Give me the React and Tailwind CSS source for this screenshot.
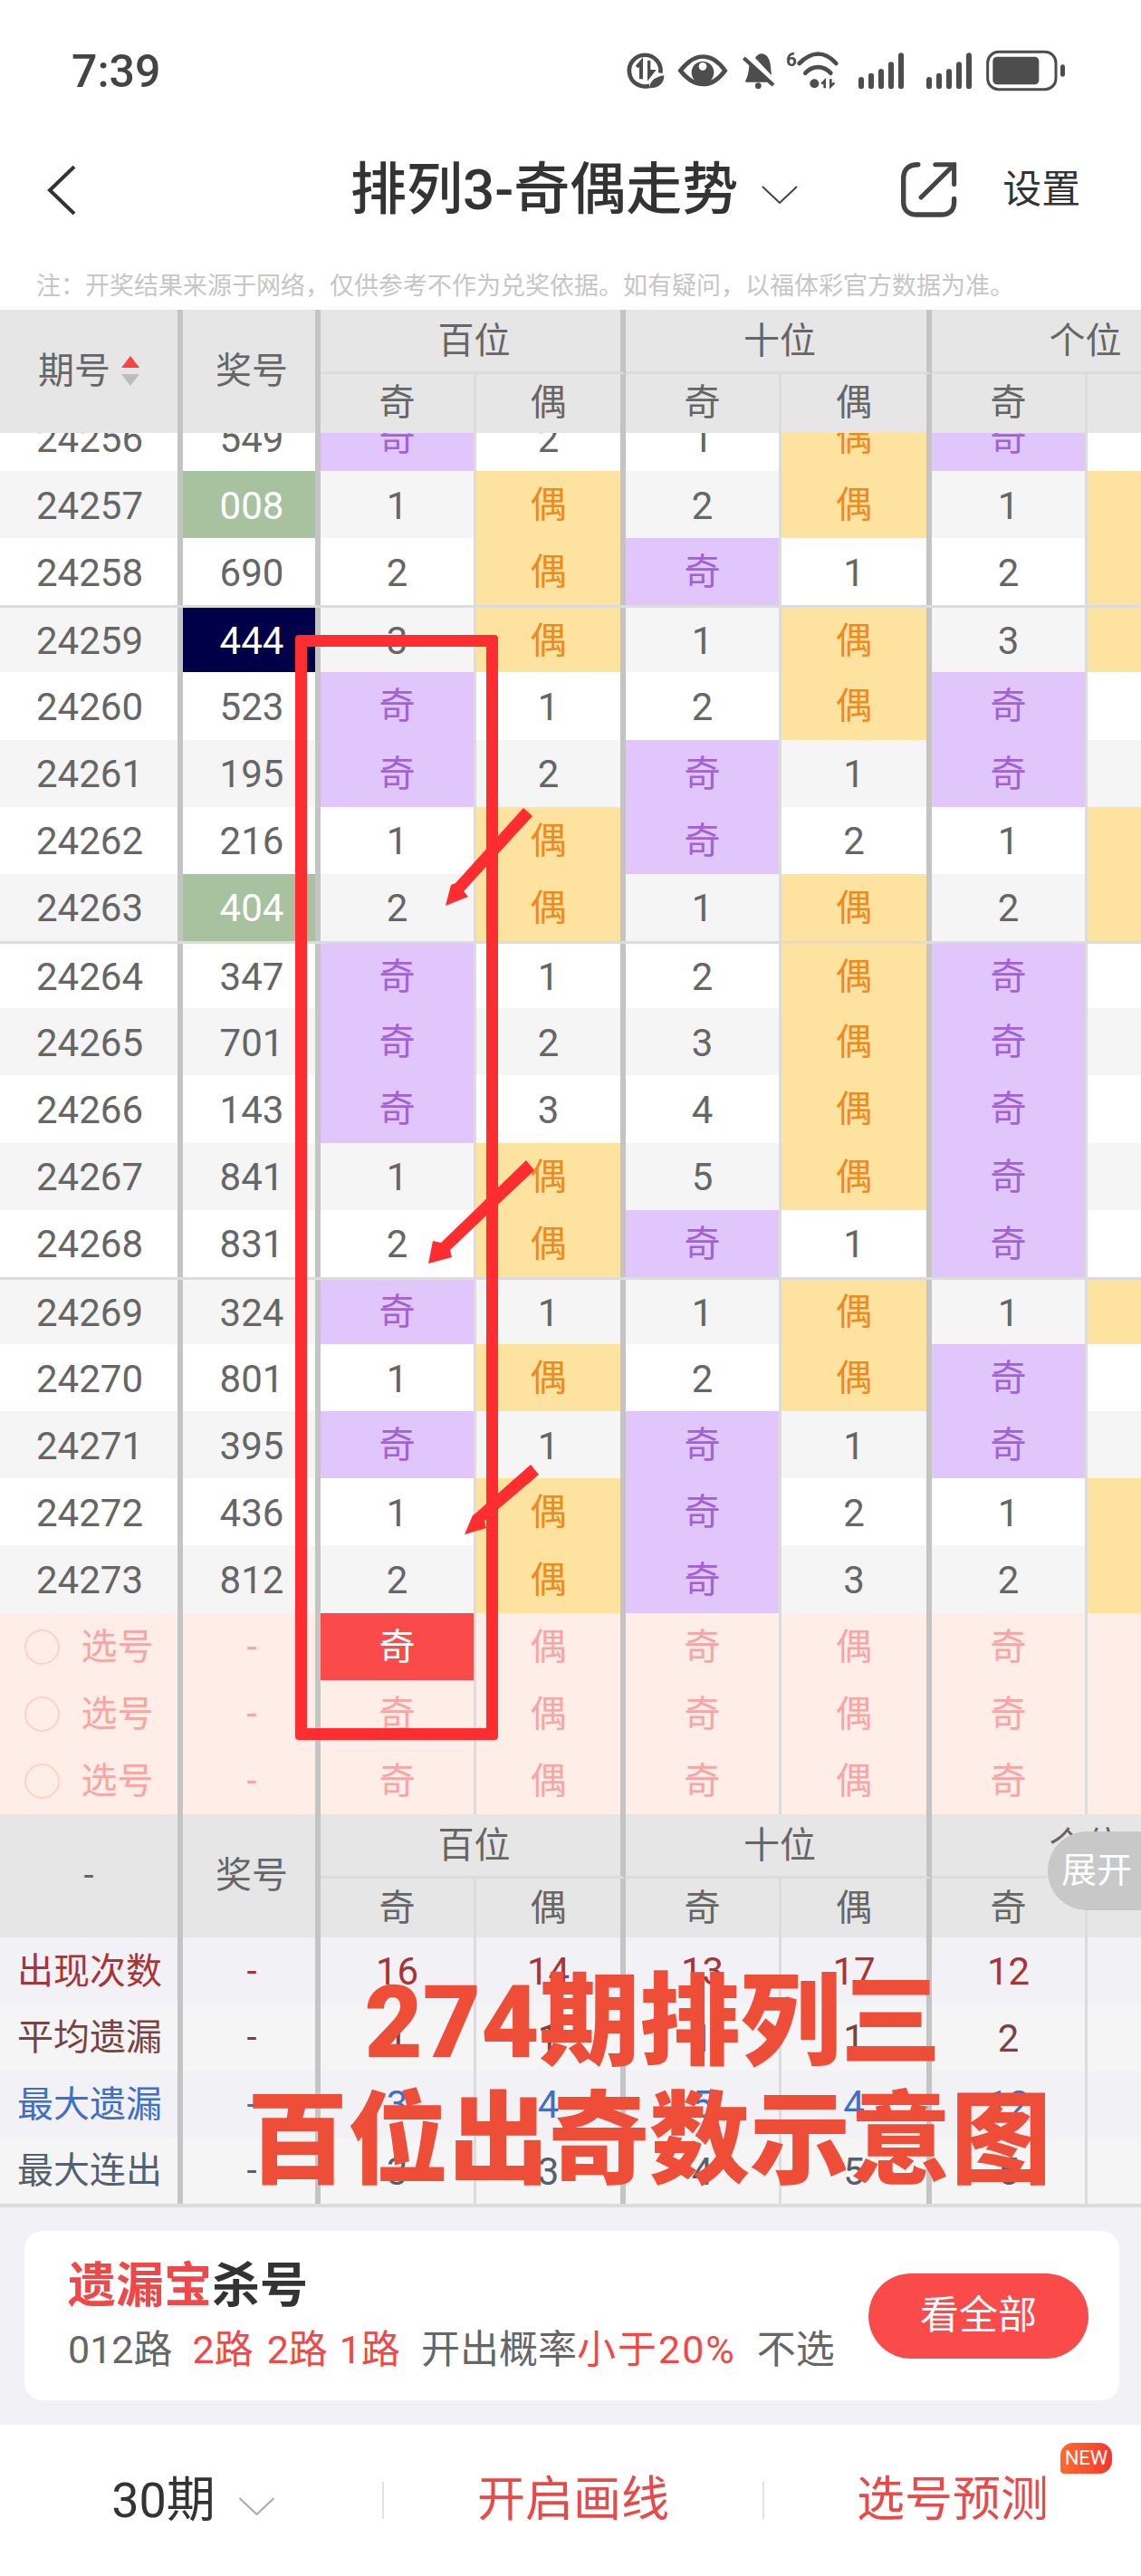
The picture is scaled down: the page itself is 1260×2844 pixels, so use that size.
const FONT = "font-['Roboto','Noto_Sans_CJK_SC',sans-serif]";
const COLS = 'grid grid-cols-[202px_152px_172px_165px_172px_166px_172px_165px] w-[1366px]';

const THICK = 'border-r-[6px] border-[#c4c4c4]';
const THIN = 'border-r-[3px] border-[#dcdcdc]';
// divider for each of the 8 columns
const DIV = [THICK, THICK, THIN, THICK, THIN, THICK, THIN, THICK];

const ROWS = [
  ['24257', '008', 'green'], ['24258', '690'], ['24259', '444', 'navy', true], ['24260', '523'],
  ['24261', '195'], ['24262', '216'], ['24263', '404', 'green'], ['24264', '347', null, true],
  ['24265', '701'], ['24266', '143'], ['24267', '841'], ['24268', '831'],
  ['24269', '324', null, true], ['24270', '801'], ['24271', '395'], ['24272', '436'], ['24273', '812'],
];

// miss counts as shown in the chart, 奇/偶 per position
const MISS = {
  24256: [[0, 2], [1, 0], [0, 1]],
  24257: [[1, 0], [2, 0], [1, 0]],
  24258: [[2, 0], [0, 1], [2, 0]],
  24259: [[3, 0], [1, 0], [3, 0]],
  24260: [[0, 1], [2, 0], [0, 1]],
  24261: [[0, 2], [0, 1], [0, 2]],
  24262: [[1, 0], [0, 2], [1, 0]],
  24263: [[2, 0], [1, 0], [2, 0]],
  24264: [[0, 1], [2, 0], [0, 1]],
  24265: [[0, 2], [3, 0], [0, 2]],
  24266: [[0, 3], [4, 0], [0, 3]],
  24267: [[1, 0], [5, 0], [0, 4]],
  24268: [[2, 0], [0, 1], [0, 5]],
  24269: [[0, 1], [1, 0], [1, 0]],
  24270: [[1, 0], [2, 0], [0, 1]],
  24271: [[0, 1], [0, 1], [0, 2]],
  24272: [[1, 0], [0, 2], [1, 0]],
  24273: [[2, 0], [0, 3], [2, 0]],
};

function Cell({ i, className = '', children }) {
  return (
    <div className={`flex items-center justify-center ${DIV[i]} ${className}`}>
      <div className="flex h-full w-full items-center justify-center pt-[2px]">{children}</div>
    </div>
  );
}

function DataRow({ no, prize, mark, groupStart, className = '' }) {
  const stripe = Number(no) % 2 === 1 ? 'bg-[#f5f5f5]' : 'bg-white';
  const prizeBg = mark === 'green' ? 'bg-[#a8c2a0] text-white' : mark === 'navy' ? 'bg-[#000048] text-white' : 'text-[#666666]';
  const values = MISS[no].flat();
  return (
    <div className={`${COLS} h-[74.18px] ${stripe} ${groupStart ? 'border-t-[3px] border-[#dcdcdc]' : ''} ${className}`}>
      <Cell i={0} className="text-[42px] text-[#666666]"><span className="pl-[2px]">{no}</span></Cell>
      <Cell i={1} className={`text-[42px] ${prizeBg}`}><span className="pl-[6px]">{prize}</span></Cell>
      {values.map((v, k) => {
        const even = k % 2 === 1;
        if (v > 0) return <Cell key={k} i={k + 2} className="text-[42px] text-[#666666]">{v}</Cell>;
        return (
          <Cell key={k} i={k + 2} className={even ? 'bg-[#fde2a0] text-[#ed8a22]' : 'bg-[#e1c6fc] text-[#a262d6]'}>
            {even ? '偶' : '奇'}
          </Cell>
        );
      })}
    </div>
  );
}

function PickRow({ active }) {
  const labels = ['奇', '偶', '奇', '偶', '奇', '偶'];
  return (
    <div className={`${COLS} h-[74.18px] bg-[#ffeee8] text-[#f7a5a5]`}>
      <Cell i={0}>
        <span className="mr-[24px] h-[39px] w-[39px] rounded-full border-2 border-[#fdd3c6]" />
        <span>选号</span>
      </Cell>
      <Cell i={1}><span className="pl-[6px]">-</span></Cell>
      {labels.map((t, k) => (
        <Cell key={k} i={k + 2} className={active && k === 0 ? 'bg-[#fb4a4a] text-white' : ''}>{t}</Cell>
      ))}
    </div>
  );
}

function TableHead({ first }) {
  const groups = [['百位', 2], ['十位', 4], ['个位', 6]];
  return (
    <div className={`${COLS} bg-[#e6e6e6] text-[#666666] grid-rows-[71px_65px]`}>
      <div className={`row-span-2 flex items-center justify-center ${THICK}`}>{first}</div>
      <div className={`row-span-2 flex items-center justify-center ${THICK}`}><span className="pl-[6px]">奖号</span></div>
      {groups.map(([t]) => (
        <div key={t} className={`col-span-2 flex h-[71px] items-center justify-center border-b-[3px] border-b-[#dcdcdc] pl-2 pt-[2px] ${THICK}`}>
          {t}
        </div>
      ))}
      {[2, 3, 4, 5, 6, 7].map((i) => (
        <div key={i} className={`flex items-center justify-center ${DIV[i]}`}>{i % 2 === 0 ? '奇' : '偶'}</div>
      ))}
    </div>
  );
}

function StatRow({ label, color, bg, values }) {
  return (
    <div className={`${COLS} h-[73.5px] ${bg} ${color}`}>
      <Cell i={0}><span className="pl-[2px]">{label}</span></Cell>
      <Cell i={1}><span className="pl-[6px]">-</span></Cell>
      {values.map((v, k) => <Cell key={k} i={k + 2} className="text-[42px]">{v}</Cell>)}
    </div>
  );
}

function StatusIcons() {
  const bars = (x) => [[0, 105], [33, 92], [66, 78], [99, 55], [132, 25]].map(([dx, top]) => (
    <rect key={dx + x} x={x + dx} y={top} width="18" height={145 - top} rx="9" />
  ));
  return (
    <svg viewBox="0 0 1530 180" className="h-[60px] w-[510px]" fill="#4d4d4d">
      {/* data saver */}
      <path d="M112 134A52 52 0 1 1 148 92" fill="none" stroke="#4d4d4d" strokeWidth="14" />
      <path d="M84 112V58M70 72L84 56V72" fill="none" stroke="#4d4d4d" strokeWidth="12" />
      <path d="M110 50V102M110 104L124 86H110Z" fill="none" stroke="#4d4d4d" strokeWidth="10" />
      <path d="M112 142C112 115 135 104 160 100C160 125 145 142 112 142Z" />
      {/* eye */}
      <path d="M214 84C262 22 318 22 362 84C318 144 262 144 214 84Z" fill="none" stroke="#4d4d4d" strokeWidth="14" />
      <circle cx="288" cy="90" r="37" />
      <circle cx="288" cy="70" r="13" fill="#fff" />
      {/* muted bell */}
      <path d="M430 116C440 100 440 80 443 62L505 122H430ZM462 42C472 22 498 22 508 48C514 64 514 86 516 100Z" />
      <path d="M424 42L522 132" stroke="#4d4d4d" strokeWidth="13" />
      <circle cx="472" cy="134" r="10" />
      {/* wifi */}
      <text x="564" y="70" fontSize="62" fontWeight="700" fontFamily="Roboto, sans-serif">6</text>
      <path d="M608 60C650 18 692 18 730 60M628 92C652 66 688 66 712 92" fill="none" stroke="#4d4d4d" strokeWidth="14" strokeLinecap="round" />
      <circle cx="658" cy="127" r="15" />
      <path d="M692 142V118L682 128M712 112V136L724 124" fill="none" stroke="#4d4d4d" strokeWidth="8" />
      {/* signal */}
      {bars(804)}
      {bars(1029)}
      {/* battery */}
      <rect x="1232" y="22" width="226" height="124" rx="36" fill="none" stroke="#4d4d4d" strokeWidth="9" />
      <rect x="1249" y="38" width="153" height="92" rx="14" />
      <rect x="1473" y="64" width="15" height="40" rx="7" />
    </svg>
  );
}

function Chevron({ className = '', stroke = '#444', width = 2 }) {
  return (
    <svg viewBox="0 0 40 20" className={className} fill="none">
      <path d="M1 1L20 19L39 1" stroke={stroke} strokeWidth={width} />
    </svg>
  );
}

export default function App() {
  return (
    <div className={`relative flex h-[2844px] w-[1260px] flex-col overflow-hidden bg-white text-[40px] ${FONT}`}>
      {/* status bar */}
      <div className="flex h-[130px] items-start justify-between pr-[70px] pt-[50px]">
        <span className="pl-[79px] text-[50px] font-medium leading-[58px] text-[#444444]">7:39</span>
        <StatusIcons />
      </div>

      {/* nav */}
      <div className="flex h-[160px] items-center">
        <svg viewBox="0 0 32 54" className="ml-[52px] h-[54px] w-[32px]" fill="none">
          <path d="M30 1L3 27L30 53" stroke="#333" strokeWidth="4" />
        </svg>
        <h1 className="ml-[303px] whitespace-nowrap text-[62px] font-medium leading-none text-[#333333]">排列3-奇偶走势</h1>
        <Chevron className="ml-[26px] mt-[10px] h-[20px] w-[40px]" />
        <svg viewBox="100 30 200 200" className="ml-[111px] h-[67px] w-[67px]" fill="none">
          <path d="M165 47C135 47 117 62 117 92V170C117 198 135 212 162 212H240C268 212 284 198 284 170V160" stroke="#444" strokeWidth="16" strokeLinecap="round" />
          <path d="M175 155L284 47M222 47H284V112" stroke="#444" strokeWidth="15" strokeLinecap="round" />
        </svg>
        <span className="ml-[48px] text-[43px] leading-none text-[#333333]">设置</span>
      </div>

      <div className="flex h-[52px] items-center pl-[40px] text-[27px] text-[#c6c6c6]">
        注：开奖结果来源于网络，仅供参考不作为兑奖依据。如有疑问，以福体彩官方数据为准。
      </div>

      {/* chart */}
      <div className="relative z-10">
        <TableHead
          first={
            <div className="flex items-center">
              <span>期号</span>
              <svg viewBox="0 0 20 33" className="ml-[12px] h-[33px] w-[20px]">
                <path d="M10 0L20 13H0Z" fill="#f94444" />
                <path d="M0 20H20L10 33Z" fill="#bdbdbd" />
              </svg>
            </div>
          }
        />
      </div>
      <div className="h-[42px] overflow-hidden">
        <DataRow no="24256" prize="549" className="-mt-[32px]" />
      </div>
      {ROWS.map(([no, prize, mark, start]) => (
        <DataRow key={no} no={no} prize={prize} mark={mark} groupStart={start} />
      ))}
      <PickRow active />
      <PickRow />
      <PickRow />
      <TableHead first="-" />
      <StatRow label="出现次数" color="text-[#a83434]" bg="bg-[#f1f1f6]" values={[16, 14, 13, 17, 12, 18]} />
      <StatRow label="平均遗漏" color="text-[#7b4242]" bg="bg-[#f5f5f5]" values={[1, 1, 1, 1, 2, 1]} />
      <StatRow label="最大遗漏" color="text-[#3f6fc6]" bg="bg-[#f1f1f6]" values={[3, 4, 5, 4, 12, 3]} />
      <StatRow label="最大连出" color="text-[#55606e]" bg="bg-[#f5f5f5]" values={[3, 3, 4, 5, 5, 3]} />
      <div className="h-[4px] w-full bg-[#dcdcdc]" />

      {/* 遗漏宝 card */}
      <div className="h-[240px] bg-[#f1f1f6] px-[27px] pt-[26px]">
        <div className="flex h-[187px] w-[1209px] items-center justify-between rounded-[20px] bg-white pl-[48px] pr-[34px]">
          <div>
            <div className="text-[53px] font-bold leading-[60px] text-[#333333]">
              <span className="text-[#f04848]">遗漏宝</span>杀号
            </div>
            <div className="mt-[14px] flex whitespace-nowrap text-[43px] leading-[52px] text-[#666666]">
              <span>012路</span>
              <span className="ml-[22px] text-[#f04848]">2路</span>
              <span className="ml-[15px] text-[#f04848]">2路</span>
              <span className="ml-[13px] text-[#f04848]">1路</span>
              <span className="ml-[23px]">开出概率</span>
              <span className="tracking-[2px] text-[#f04848]">小于20%</span>
              <span className="ml-[23px]">不选</span>
            </div>
          </div>
          <button className="h-[94px] w-[243px] rounded-full bg-[#fb4a4a] text-[43px] text-white">看全部</button>
        </div>
      </div>

      {/* bottom bar */}
      <div className="flex h-[167px] items-start pt-[56px]">
        <div className="flex h-[56px] flex-1 items-center justify-center pl-[6px]">
          <span className="text-[54px] leading-none text-[#333333]">30期</span>
          <Chevron className="ml-[24px] mt-[12px] h-[20px] w-[43px]" stroke="#aaa" />
        </div>
        <div className="mt-[7px] h-[41px] w-[2px] bg-[#e2e2e2]" />
        <div className="flex h-[56px] w-[418px] items-center justify-center text-[53px] text-[#e84a4a]">开启画线</div>
        <div className="mt-[7px] h-[41px] w-[2px] bg-[#e2e2e2]" />
        <div className="flex h-[56px] w-[416px] items-center justify-center">
          <span className="relative text-[53px] text-[#e84a4a]">
            选号预测
            <span className="absolute -top-[24px] left-[225px] flex h-[34px] w-[57px] items-center justify-center rounded-bl-[4px] rounded-br-[14px] rounded-tl-[14px] rounded-tr-[14px] bg-gradient-to-r from-[#ff6a2b] to-[#f8342e] font-['Roboto',sans-serif] text-[22px] leading-none text-white">
              NEW
            </span>
          </span>
        </div>
      </div>

      {/* 展开 handle */}
      <div className="absolute left-[1157px] top-[2022px] z-20 flex h-[87px] w-[103px] items-center justify-end rounded-l-[44px] bg-[#c8c8c8] pr-[10px] text-[39px] text-white">
        展开
      </div>

      {/* annotations drawn on top of the screenshot */}
      <div className="absolute left-[326px] top-[701px] z-30 h-[1220px] w-[224px] rounded-[4px] border-[13px] border-[#ff2d2f]" />
      <svg viewBox="0 0 1260 2844" className="pointer-events-none absolute left-0 top-0 z-30 h-[2844px] w-[1260px]">
        <g fill="#ff2d2f">
          <path d="M578 892L588 901L512 984L517 990L492 1000L498 977L503 975Z" />
          <path d="M581 1281L590 1292L497 1380L499 1388L473 1395L478 1370L487 1372Z" />
          <path d="M586 1617L595 1628L535 1679L537 1687L513 1694L522 1673L526 1670Z" />
        </g>
      </svg>
      <div className="pointer-events-none absolute left-[267px] top-[2168px] z-30 w-[900px] text-center text-[111px] font-black leading-[131px] text-[#ee4d38]">
        <div className="pl-[8px]">274期排列三</div>
        <div>百位出奇数示意图</div>
      </div>
    </div>
  );
}
